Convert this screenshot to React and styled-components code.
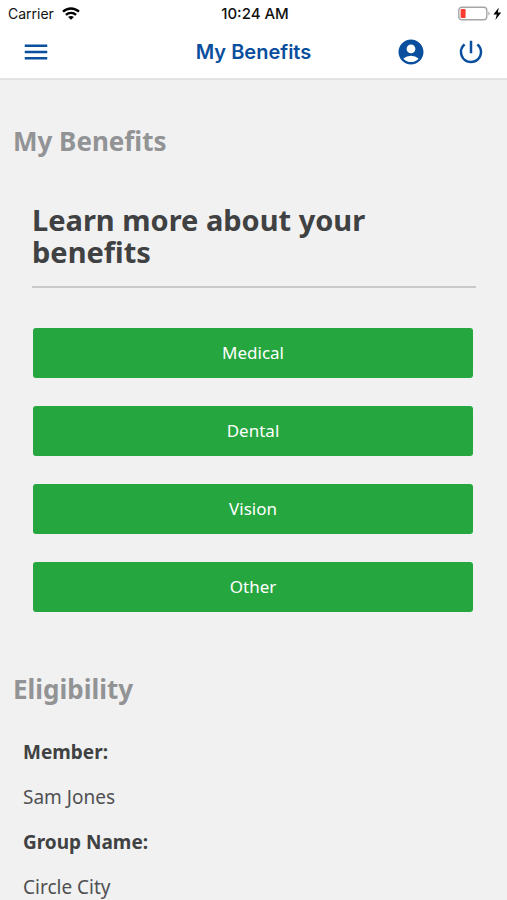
import React from "react";
import styled, { createGlobalStyle } from "styled-components";

import { MdAccountCircle, MdMenu, MdPowerSettingsNew } from "react-icons/md";

const benefits = ["Medical", "Dental", "Vision", "Other"];

const eligibility = [
  { label: "Member:", value: "Sam Jones" },
  { label: "Group Name:", value: "Circle City" },
];

const WifiIcon = () => (
  <svg width="18" height="13" viewBox="0 0 18 13" aria-hidden="true">
    <g fill="none" stroke="#000" strokeWidth="2.3">
      <path d="M1 4.7C5.6 0.4 12.4 0.4 17 4.7" />
      <path d="M3.9 7.9C6.8 5.2 11.2 5.2 14.1 7.9" />
    </g>
    <path d="M9 12.8L6.1 10C7.8 8.5 10.2 8.5 11.9 10Z" />
  </svg>
);

const BatteryIcon = () => (
  <svg width="44" height="16" viewBox="0 0 44 16" aria-hidden="true">
    <rect
      x="0.8"
      y="1.2"
      width="28"
      height="12.6"
      rx="3"
      fill="#fff"
      stroke="#a6a6a6"
      strokeWidth="1.4"
    />
    <rect x="2.6" y="3" width="5" height="9" rx="1" fill="#fb3b30" />
    <path d="M30.4 5.4C32 6 32 9 30.4 9.6Z" fill="#a6a6a6" />
    <path d="M40.8 1.4L35.4 8.6H38.8L37.4 14L43.2 6.6H39.8Z" fill="#000" />
  </svg>
);

const App = () => {
  return (
    <>
      <GlobalStyle />
      <Header>
        <StatusBar>
          <Carrier>
            Carrier
            <WifiIcon />
          </Carrier>
          <Time>10:24 AM</Time>
          <Battery>
            <BatteryIcon />
          </Battery>
        </StatusBar>
        <Toolbar>
          <Actions>
            <IconButton aria-label="Menu">
              <MdMenu />
            </IconButton>
          </Actions>
          <ToolbarTitle>My Benefits</ToolbarTitle>
          <Actions $end>
            <IconButton aria-label="Account">
              <MdAccountCircle />
            </IconButton>
            <IconButton aria-label="Log out">
              <MdPowerSettingsNew />
            </IconButton>
          </Actions>
        </Toolbar>
      </Header>
      <Content>
        <SectionTitle>My Benefits</SectionTitle>
        <Panel>
          <PanelTitle>Learn more about your benefits</PanelTitle>
          <ButtonList>
            {benefits.map((name) => (
              <BenefitButton key={name}>{name}</BenefitButton>
            ))}
          </ButtonList>
        </Panel>
        <SectionTitle>Eligibility</SectionTitle>
        <Details>
          {eligibility.map(({ label, value }) => (
            <React.Fragment key={label}>
              <Label>{label}</Label>
              <Value>{value}</Value>
            </React.Fragment>
          ))}
        </Details>
      </Content>
    </>
  );
};

export default App;

const GlobalStyle = createGlobalStyle`
  * {
    box-sizing: border-box;
  }

  body {
    margin: 0;
    background-color: #f1f1f1;
    color: #404142;
    font-family: "Noto Sans", "Open Sans", sans-serif;
  }

  #root {
    height: 100vh;
    display: flex;
    flex-direction: column;
  }
`;

const Header = styled.header`
  flex: none;
  background-color: white;
  border-bottom: 2px solid #e2e2e2;
  font-family: Inter, "Liberation Sans", sans-serif;
`;

const StatusBar = styled.div`
  height: 27px;
  padding: 0 5px 0 8px;
  display: grid;
  grid-template-columns: 1fr auto 1fr;
  align-items: center;
  color: #111;
  font-size: 14px;
`;

const Carrier = styled.div`
  display: flex;
  align-items: center;
  gap: 8px;
`;

const Time = styled.div`
  font-size: 15px;
  font-weight: 500;
`;

const Battery = styled.div`
  display: flex;
  justify-content: flex-end;
`;

const Toolbar = styled.div`
  height: 51px;
  padding: 0 21px 2px;
  display: grid;
  grid-template-columns: 1fr auto 1fr;
  align-items: center;
`;

const Actions = styled.div`
  display: flex;
  justify-content: ${(props) => (props.$end ? "flex-end" : "flex-start")};
  gap: 30px;
`;

const IconButton = styled.button`
  width: 30px;
  height: 30px;
  padding: 0;
  border: 0;
  background: none;
  color: #0a4f9e;
  font-size: 30px;
  line-height: 0;
`;

const ToolbarTitle = styled.h1`
  margin: 0;
  color: #0a4f9e;
  font-size: 20px;
  font-weight: 600;
`;

const Content = styled.main`
  flex: 1;
  overflow: hidden;
  padding: 43px 13px 0;
`;

const SectionTitle = styled.h2`
  margin: 0;
  color: #929395;
  font-size: 26px;
  line-height: 36px;
`;

const Panel = styled.section`
  padding: 45px 18px 59px 19px;
`;

const PanelTitle = styled.h3`
  margin: 0 0 40px;
  padding-bottom: 18px;
  border-bottom: 2px solid #c9c9ca;
  font-size: 29px;
  line-height: 32px;
`;

const ButtonList = styled.div`
  padding: 0 3px 0 1px;
  display: flex;
  flex-direction: column;
  gap: 28px;
`;

const BenefitButton = styled.button`
  height: 50px;
  padding-bottom: 3px;
  border: 0;
  border-radius: 3px;
  background-color: #26a63f;
  color: white;
  font-family: inherit;
  font-size: 17px;
`;

const Details = styled.dl`
  margin: 0;
  padding: 33px 10px;
  font-size: 19px;
  line-height: 25px;
`;

const Label = styled.dt`
  margin-bottom: 20px;
  font-weight: 700;
`;

const Value = styled.dd`
  margin: 0 0 20px;
  color: #4f5051;
`;
